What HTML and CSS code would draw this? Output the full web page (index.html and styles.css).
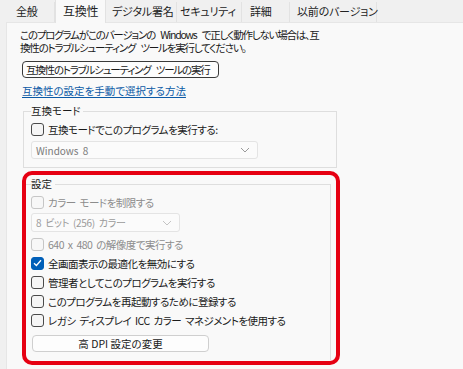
FILE: index.html
```html
<!DOCTYPE html>
<html lang="ja">
<head>
    <meta charset="UTF-8">
    <title>互換性</title>
    <link rel="stylesheet" href="styles.css">
</head>
<body>
    <div class="tabs">
        <div class="tab tab-general">全般</div>
        <div class="tab tab-active">互換性</div>
        <div class="tab tab-sign">デジタル署名</div>
        <div class="tab tab-security">セキュリティ</div>
        <div class="tab tab-detail">詳細</div>
        <div class="tab tab-prev">以前のバージョン</div>
    </div>

    <div class="panel">
        <p class="intro">このプログラムがこのバージョンの Windows で正しく動作しない場合は、互<br>換性のトラブルシューティング ツールを実行してください。</p>

        <button class="btn btn-dark">互換性のトラブルシューティング ツールの実行</button>

        <a class="link" href="#">互換性の設定を手動で選択する方法</a>

        <fieldset class="group">
            <legend>互換モード</legend>
            <label class="check">
                <span class="box"></span>
                <span>互換モードでこのプログラムを実行する:</span>
            </label>
            <div class="select select-os">
                <span>Windows 8</span>
                <svg width="10" height="6" viewBox="0 0 10 6"><path d="M1 1 L5 5 L9 1" fill="none" stroke="#9a9a9a" stroke-width="1"/></svg>
            </div>
        </fieldset>

        <div class="marker">
            <fieldset class="group group-settings">
                <legend>設定</legend>
                <label class="check disabled">
                    <span class="box"></span>
                    <span>カラー モードを制限する</span>
                </label>
                <div class="select select-color">
                    <span>8 ビット (256) カラー</span>
                    <svg width="10" height="6" viewBox="0 0 10 6"><path d="M1 1 L5 5 L9 1" fill="none" stroke="#c4c4c4" stroke-width="1"/></svg>
                </div>
                <label class="check disabled">
                    <span class="box"></span>
                    <span>640 x 480 の解像度で実行する</span>
                </label>
                <label class="check">
                    <span class="box checked">
                        <svg width="9" height="8" viewBox="0 0 9 8"><path d="M1 4.2 L3.4 6.5 L8 1.3" fill="none" stroke="#fff" stroke-width="1.3"/></svg>
                    </span>
                    <span>全画面表示の最適化を無効にする</span>
                </label>
                <label class="check">
                    <span class="box"></span>
                    <span>管理者としてこのプログラムを実行する</span>
                </label>
                <label class="check">
                    <span class="box"></span>
                    <span>このプログラムを再起動するために登録する</span>
                </label>
                <label class="check">
                    <span class="box"></span>
                    <span>レガシ ディスプレイ ICC カラー マネジメントを使用する</span>
                </label>
                <button class="btn btn-dpi">高 DPI 設定の変更</button>
            </fieldset>
        </div>
    </div>
</body>
</html>
```

FILE: styles.css
```css
:root {
    --window-bg: #f0f0f0;
    --panel-bg: #f9f9f9;
    --line: #dedede;
    --text: #1a1a1a;
    --muted: #8c8c8c;
    --link: #0b5aa6;
    --check: #005fb8;
    --marker: #e60012;
}

* {
    margin: 0;
    padding: 0;
    box-sizing: border-box;
}

body {
    background-color: var(--window-bg);
    color: var(--text);
    font-family: "Noto Sans CJK JP", "Noto Sans", sans-serif;
    font-size: 10.5px;
    letter-spacing: -0.5px;
    word-spacing: 2px;
    font-feature-settings: "palt";
    width: 463px;
    height: 369px;
    overflow: hidden;
}

.tabs {
    display: flex;
    height: 22px;
    margin-left: 6px;
    align-items: flex-end;
}

.tab {
    height: 20px;
    line-height: 19px;
    font-size: 11px;
    letter-spacing: -0.2px;
    white-space: nowrap;
    padding-left: 10px;
    border-right: 1px solid #e2e2e2;
    color: #222;
}

.tab-general { width: 49px; }
.tab-sign { width: 71px; padding-left: 6px; }
.tab-security { width: 65px; padding-left: 3px; }
.tab-detail { width: 48px; padding-left: 8px; }
.tab-prev { width: 87px; padding-left: 7px; }

.tab-active {
    width: 51px;
    height: 23px;
    line-height: 22px;
    padding-left: 7px;
    background-color: var(--panel-bg);
    border-left: 1px solid #e2e2e2;
    margin-bottom: -1px;
    position: relative;
    font-size: 12px;
}

.panel {
    margin-left: 6px;
    height: 347px;
    background-color: var(--panel-bg);
    border-top: 1px solid #e6e6e6;
    border-left: 1px solid #e6e6e6;
    padding: 6px 0 0 13px;
}

.intro {
    line-height: 12.5px;
    letter-spacing: -1.2px;
    word-spacing: 4px;
    white-space: nowrap;
}

.btn {
    display: block;
    height: 17px;
    font-family: inherit;
    font-size: 10.5px;
    letter-spacing: inherit;
    word-spacing: inherit;
    font-feature-settings: "palt";
    color: var(--text);
    background-color: #fdfdfd;
    line-height: 14px;
    white-space: nowrap;
}

.btn-dark {
    margin: 7px 0 0 2px;
    width: 197px;
    border: 1px solid #3a3a3a;
    border-radius: 4px;
    text-align: left;
    padding-left: 3px;
    letter-spacing: -1.2px;
    word-spacing: 4px;
}

.link {
    display: block;
    width: fit-content;
    margin: 6px 0 0 2px;
    line-height: 14px;
    letter-spacing: 0;
    color: var(--link);
    text-decoration: underline;
    text-underline-offset: 2px;
}

.group {
    margin: 6px 0 0 3px;
    width: 314px;
    border: 1px solid var(--line);
    padding: 0 0 8px 7px;
}

.group legend {
    line-height: 14px;
    padding: 0 2px 0 0;
    letter-spacing: 0;
}

.check {
    display: flex;
    align-items: center;
    gap: 4px;
    height: 14px;
    margin-top: 5px;
    white-space: nowrap;
}

.group > .check:first-of-type {
    margin-top: 4px;
}

.box {
    flex: none;
    width: 13px;
    height: 13px;
    border: 1px solid #4a4a4a;
    border-radius: 3px;
    background-color: #f5f5f5;
    display: flex;
    align-items: center;
    justify-content: center;
}

.box.checked {
    background-color: var(--check);
    border-color: var(--check);
}

.disabled {
    color: var(--muted);
}

.disabled .box {
    border-color: #c6c6c6;
    background-color: #f7f7f7;
}

.select {
    display: flex;
    align-items: center;
    justify-content: space-between;
    height: 18px;
    margin-top: 5px;
    padding: 0 7px 0 4px;
    border: 1px solid #e4e4e4;
    border-radius: 3px;
    background-color: #fbfbfb;
    color: #7a7a7a;
    font-size: 10px;
    letter-spacing: 0;
}

.select-os {
    width: 227px;
}

.select-color {
    width: 149px;
    height: 19px;
    margin-top: 4px;
    color: #9a9a9a;
    letter-spacing: -0.3px;
}

.marker {
    margin: 3px 0 0 2px;
    width: 318px;
    height: 194px;
    border: 4px solid var(--marker);
    border-radius: 10px;
}

.group-settings {
    margin: 2px 0 0 0;
    width: 305px;
    border-left: none;
    border-bottom: none;
    padding-left: 5px;
}

.group-settings legend {
    padding-right: 3px;
}

.btn-dpi {
    margin: 8px 0 0 1px;
    width: 177px;
    border: 1px solid #cfcfcf;
    border-radius: 4px;
    text-align: center;
    letter-spacing: 0;
    word-spacing: 0;
}
```
